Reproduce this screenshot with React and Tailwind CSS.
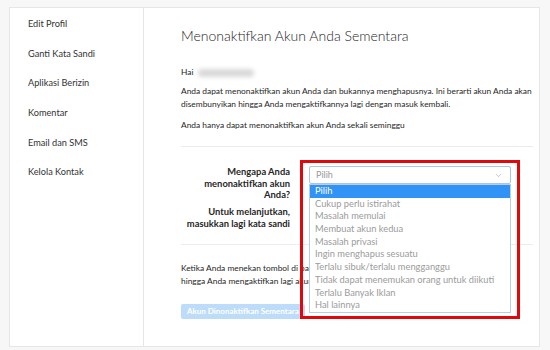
import { ChevronDown } from "lucide-react";

const menu = [
  "Edit Profil",
  "Ganti Kata Sandi",
  "Aplikasi Berizin",
  "Komentar",
  "Email dan SMS",
  "Kelola Kontak",
];

const reasons = [
  "Pilih",
  "Cukup perlu istirahat",
  "Masalah memulai",
  "Membuat akun kedua",
  "Masalah privasi",
  "Ingin menghapus sesuatu",
  "Terlalu sibuk/terlalu mengganggu",
  "Tidak dapat menemukan orang untuk diikuti",
  "Terlalu Banyak Iklan",
  "Hal lainnya",
];

export default function App() {
  return (
    <div
      className="relative w-[550px] h-[350px] overflow-hidden bg-[#f7f7f7] pt-[7px] pl-[9px] text-[#262626]"
      style={{ fontFamily: 'Lato, "Open Sans", sans-serif' }}
    >
      <div className="flex w-[531px] h-[340px] bg-white border border-[#e6e6e6]">
        {/* sidebar */}
        <div className="w-[134px] shrink-0 border-r border-[#e6e6e6] pl-[18px] pt-[1px]">
          {menu.map((m) => (
            <div key={m} className="h-[29.7px] flex items-center text-[9.2px] text-[#333]">
              {m}
            </div>
          ))}
        </div>

        {/* main */}
        <div className="flex-1 min-w-0 overflow-hidden pl-[37px] pr-[6px] pt-[17px]">
          <h1 className="text-[14px] leading-[22px] font-light text-[#262626]">
            Menonaktifkan Akun Anda Sementara
          </h1>

          <div className="mt-[19px] flex items-center gap-[5px] text-[8.4px] leading-[13px]">
            <span>Hai</span>
            <span className="w-[56px] h-[8px] rounded-full bg-[#d9d9d9] blur-[2px]" />
          </div>

          <p className="mt-[6px] text-[8.4px] leading-[13px] whitespace-nowrap">
            Anda dapat menonaktifkan akun Anda dan bukannya menghapusnya. Ini berarti akun Anda akan
            <br />
            disembunyikan hingga Anda mengaktifkannya lagi dengan masuk kembali.
          </p>
          <p className="mt-[8px] text-[8.4px] leading-[13px]">
            Anda hanya dapat menonaktifkan akun Anda sekali seminggu
          </p>

          <div className="mt-[14px] border-t border-[#ececec]" />

          <div className="flex pt-[19px] pb-[15px]">
            <div className="w-[109px] shrink-0 text-right text-[9.4px] leading-[11.5px] font-bold text-[#262626] whitespace-nowrap">
              <div>
                Mengapa Anda
                <br />
                menonaktifkan akun
                <br />
                Anda?
              </div>
              <div className="mt-[5.5px]">
                Untuk melanjutkan,
                <br />
                masukkan lagi kata sandi
              </div>
            </div>
            <div className="relative ml-[19px] w-[202px] h-[18px]">
              <div className="h-[18px] border border-[#a7c4ea] rounded-[2px] flex items-center justify-between pl-[6px] pr-[7px] text-[9px] text-[#999]">
                <span>Pilih</span>
                <ChevronDown size={9} strokeWidth={1.5} className="text-[#999]" />
              </div>
              <div className="absolute left-0 top-[18px] w-[202px] bg-white border border-[#b9cde6] z-10">
                {reasons.map((r, i) => (
                  <div
                    key={r}
                    className={
                      i === 0
                        ? "h-[12.7px] leading-[12.7px] pl-[5px] text-[9.3px] bg-[#3193f5] text-white"
                        : "h-[12.7px] leading-[12.7px] pl-[5px] text-[9.3px] text-[#9b9b9b]"
                    }
                  >
                    {r}
                  </div>
                ))}
              </div>
            </div>
          </div>

          <div className="border-t border-[#ececec]" />

          <p className="mt-[17px] w-[330px] overflow-hidden text-[8.4px] leading-[13px] whitespace-nowrap">
            Ketika Anda menekan tombol di bawah, foto, komentar, dan suka Anda akan disembunyikan
            <br />
            hingga Anda mengaktifkan lagi akun Anda dengan masuk kembali.
          </p>

          <button className="mt-[16px] h-[15px] px-[6px] rounded-[2px] bg-[#bcdcfa] text-white text-[8px] font-bold leading-[15px] whitespace-nowrap">
            Akun Dinonaktifkan Sementara
          </button>
        </div>
      </div>

      {/* red annotation box */}
      <div className="absolute left-[300px] top-[160px] w-[220px] h-[159px] border-[3px] border-[#e0080b] z-20 pointer-events-none" />
    </div>
  );
}
